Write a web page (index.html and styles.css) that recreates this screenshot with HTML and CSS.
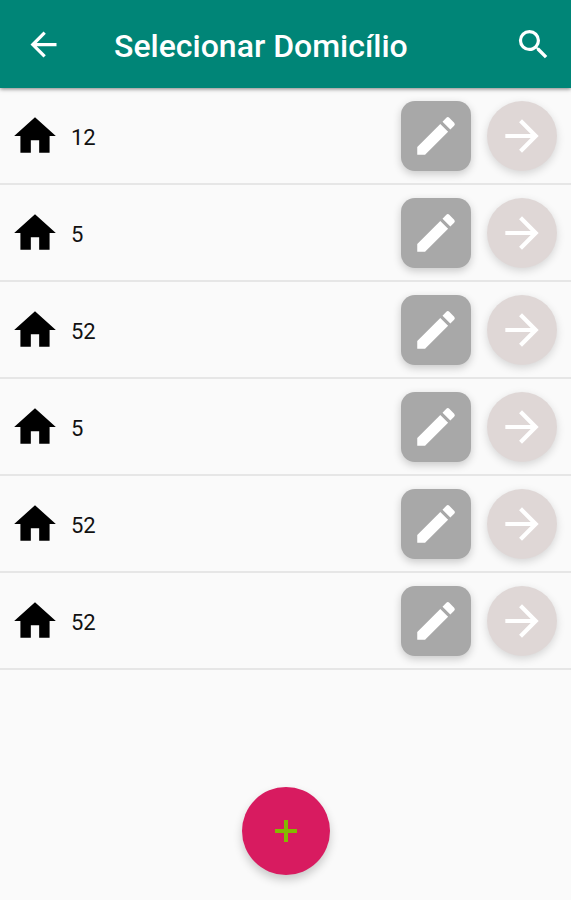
FILE: index.html
```html
<!DOCTYPE html>
<html lang="pt-BR">
  <head>
    <meta charset="utf-8">
    <meta name="viewport" content="width=device-width, initial-scale=1">
    <title>Selecionar Domicílio</title>
    <link rel="stylesheet" href="styles.css">
  </head>
  <body>
    <svg class="sprite" aria-hidden="true">
      <symbol id="home" viewBox="0 0 24 24"><path d="M10 20v-6h4v6h5v-8h3L12 3 2 12h3v8z"/></symbol>
      <symbol id="edit" viewBox="0 0 24 24"><path d="M3 17.25V21h3.75L17.81 9.94l-3.75-3.75L3 17.25zM20.71 7.04a1 1 0 0 0 0-1.41l-2.34-2.34a1 1 0 0 0-1.41 0l-1.83 1.83 3.75 3.75 1.83-1.83z"/></symbol>
      <symbol id="forward" viewBox="0 0 24 24"><path d="M12 4l-1.41 1.41L16.17 11H4v2h12.17l-5.58 5.59L12 20l8-8z"/></symbol>
    </svg>

    <header class="toolbar">
      <button class="toolbar-button" aria-label="Voltar">
        <svg class="toolbar-icon" viewBox="0 0 24 24"><path d="M20 11H7.83l5.59-5.59L12 4l-8 8 8 8 1.41-1.41L7.83 13H20v-2z"/></svg>
      </button>
      <h1 class="title">Selecionar Domicílio</h1>
      <button class="toolbar-button" aria-label="Buscar">
        <svg class="toolbar-icon" viewBox="0 0 24 24"><path d="M15.5 14h-.79l-.28-.27A6.47 6.47 0 0 0 16 9.5 6.5 6.5 0 1 0 9.5 16c1.61 0 3.09-.59 4.23-1.57l.27.28v.79l5 4.99L20.49 19l-4.99-5zm-6 0C7.01 14 5 11.99 5 9.5S7.01 5 9.5 5 14 7.01 14 9.5 11.99 14 9.5 14z"/></svg>
      </button>
    </header>

    <ul class="list">
      <li class="row">
        <svg class="icon"><use href="#home"/></svg>
        <span class="number">12</span>
        <button class="edit" aria-label="Editar"><svg class="icon"><use href="#edit"/></svg></button>
        <button class="go" aria-label="Abrir"><svg class="icon"><use href="#forward"/></svg></button>
      </li>
      <li class="row">
        <svg class="icon"><use href="#home"/></svg>
        <span class="number">5</span>
        <button class="edit" aria-label="Editar"><svg class="icon"><use href="#edit"/></svg></button>
        <button class="go" aria-label="Abrir"><svg class="icon"><use href="#forward"/></svg></button>
      </li>
      <li class="row">
        <svg class="icon"><use href="#home"/></svg>
        <span class="number">52</span>
        <button class="edit" aria-label="Editar"><svg class="icon"><use href="#edit"/></svg></button>
        <button class="go" aria-label="Abrir"><svg class="icon"><use href="#forward"/></svg></button>
      </li>
      <li class="row">
        <svg class="icon"><use href="#home"/></svg>
        <span class="number">5</span>
        <button class="edit" aria-label="Editar"><svg class="icon"><use href="#edit"/></svg></button>
        <button class="go" aria-label="Abrir"><svg class="icon"><use href="#forward"/></svg></button>
      </li>
      <li class="row">
        <svg class="icon"><use href="#home"/></svg>
        <span class="number">52</span>
        <button class="edit" aria-label="Editar"><svg class="icon"><use href="#edit"/></svg></button>
        <button class="go" aria-label="Abrir"><svg class="icon"><use href="#forward"/></svg></button>
      </li>
      <li class="row">
        <svg class="icon"><use href="#home"/></svg>
        <span class="number">52</span>
        <button class="edit" aria-label="Editar"><svg class="icon"><use href="#edit"/></svg></button>
        <button class="go" aria-label="Abrir"><svg class="icon"><use href="#forward"/></svg></button>
      </li>
    </ul>

    <footer class="footer">
      <button class="add" aria-label="Adicionar">
        <svg class="add-icon" viewBox="0 0 22 22"><path d="M9 0h4v9h9v4h-9v9H9v-9H0V9h9z"/></svg>
      </button>
    </footer>
  </body>
</html>
```
FILE: styles.css
```css
* {
  box-sizing: border-box;
}

body {
  display: flex;
  flex-direction: column;
  min-height: 100vh;
  margin: 0;
  background-color: #fafafa;
  font-family: Roboto, sans-serif;
}

button {
  display: flex;
  align-items: center;
  justify-content: center;
  flex: none;
  padding: 0;
  border: none;
  cursor: pointer;
}

svg {
  display: block;
  flex: none;
  fill: currentColor;
}

.sprite {
  display: none;
}

.toolbar {
  display: flex;
  align-items: center;
  height: 88px;
  padding: 0 18px 0 24px;
  background-color: #008577;
  color: white;
  box-shadow: 0 1px 4px rgba(0, 0, 0, 0.5);
}

.toolbar-button {
  background: none;
  color: white;
}

.toolbar-icon {
  width: 39px;
  height: 39px;
}

.title {
  flex: 1;
  margin: 0;
  padding: 4px 0 0 51px;
  font-size: 32px;
  font-weight: 500;
}

.list {
  margin: 0;
  padding: 0;
  list-style: none;
}

.row {
  display: flex;
  align-items: center;
  padding: 13px 14px 12px 10px;
  border-bottom: 2px solid #e6e6e6;
}

.icon {
  width: 50px;
  height: 50px;
}

.number {
  flex: 1;
  padding: 2px 0 0 11px;
  font-size: 22px;
  color: #111;
}

.edit,
.go {
  width: 70px;
  height: 70px;
  color: white;
}

.edit {
  margin-right: 16px;
  border-radius: 14px;
  background-color: #a8a8a8;
  box-shadow: 0 3px 8px rgba(0, 0, 0, 0.2);
}

.go {
  border-radius: 50%;
  background-color: #dfd7d6;
  box-shadow: 0 3px 8px rgba(0, 0, 0, 0.15);
}

.footer {
  display: flex;
  justify-content: center;
  margin-top: auto;
  padding: 25px;
}

.add {
  width: 88px;
  height: 88px;
  border-radius: 50%;
  background-color: #d81b60;
  color: #84b900;
  box-shadow: 0 5px 10px rgba(0, 0, 0, 0.2);
}

.add-icon {
  width: 22px;
  height: 22px;
}
```
